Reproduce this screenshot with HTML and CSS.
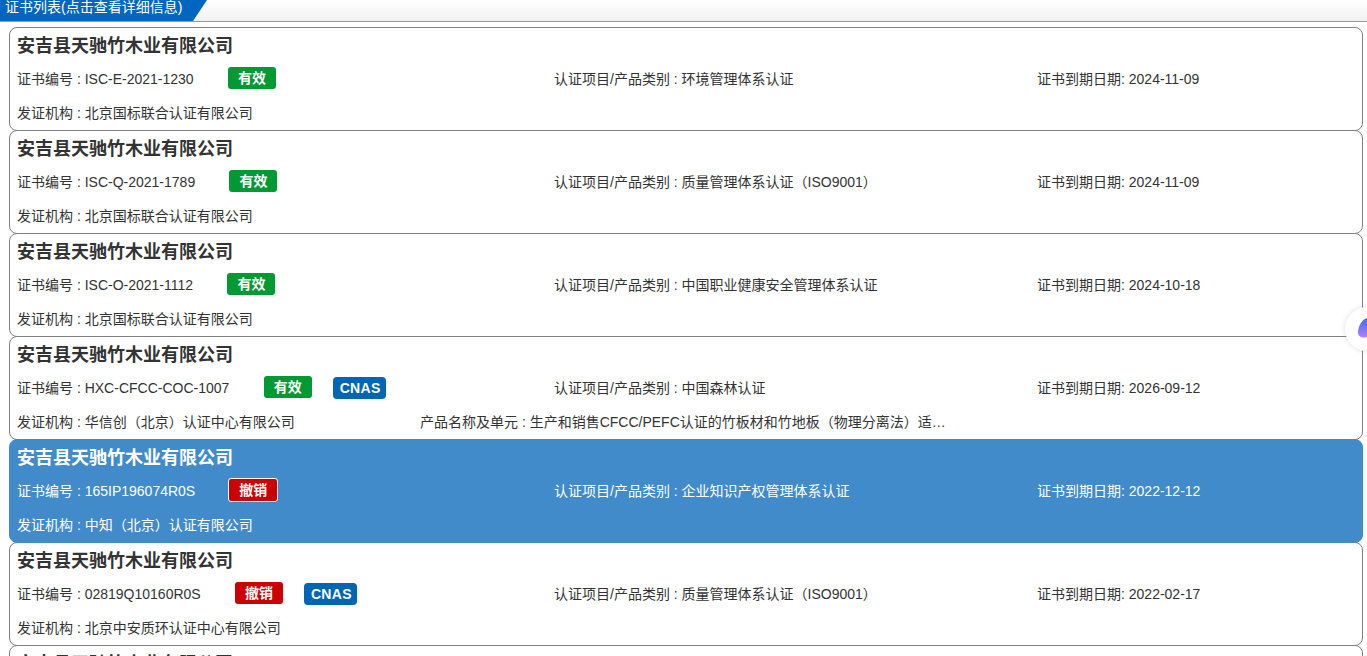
FILE: index.html
```html
<!DOCTYPE html>
<html lang="zh-CN">
<head>
<meta charset="utf-8">
<title>证书列表</title>
<link rel="stylesheet" href="styles.css">
</head>
<body>
<header class="bar"><div class="bar-tab">证书列表(点击查看详细信息)</div></header>
<main class="list">
  <article class="card">
    <h3 class="name">安吉县天驰竹木业有限公司</h3>
    <div class="row">
      <div class="cell">证书编号 : ISC-E-2021-1230<span class="tag ok">有效</span></div>
      <div class="cell">认证项目/产品类别 : 环境管理体系认证</div>
      <div class="cell">证书到期日期: 2024-11-09</div>
    </div>
    <div class="row2"><div class="cell">发证机构 : 北京国标联合认证有限公司</div></div>
  </article>
  <article class="card">
    <h3 class="name">安吉县天驰竹木业有限公司</h3>
    <div class="row">
      <div class="cell">证书编号 : ISC-Q-2021-1789<span class="tag ok">有效</span></div>
      <div class="cell">认证项目/产品类别 : 质量管理体系认证（ISO9001）</div>
      <div class="cell">证书到期日期: 2024-11-09</div>
    </div>
    <div class="row2"><div class="cell">发证机构 : 北京国标联合认证有限公司</div></div>
  </article>
  <article class="card">
    <h3 class="name">安吉县天驰竹木业有限公司</h3>
    <div class="row">
      <div class="cell">证书编号 : ISC-O-2021-1112<span class="tag ok">有效</span></div>
      <div class="cell">认证项目/产品类别 : 中国职业健康安全管理体系认证</div>
      <div class="cell">证书到期日期: 2024-10-18</div>
    </div>
    <div class="row2"><div class="cell">发证机构 : 北京国标联合认证有限公司</div></div>
  </article>
  <article class="card">
    <h3 class="name">安吉县天驰竹木业有限公司</h3>
    <div class="row">
      <div class="cell">证书编号 : HXC-CFCC-COC-1007<span class="tag ok">有效</span><span class="tag cnas">CNAS</span></div>
      <div class="cell">认证项目/产品类别 : 中国森林认证</div>
      <div class="cell">证书到期日期: 2026-09-12</div>
    </div>
    <div class="row2">
      <div class="cell">发证机构 : 华信创（北京）认证中心有限公司</div>
      <div class="cell clip">产品名称及单元 : 生产和销售CFCC/PEFC认证的竹板材和竹地板（物理分离法）适用于CFCC和PEFC</div>
    </div>
  </article>
  <article class="card active">
    <h3 class="name">安吉县天驰竹木业有限公司</h3>
    <div class="row">
      <div class="cell">证书编号 : 165IP196074R0S<span class="tag bad">撤销</span></div>
      <div class="cell">认证项目/产品类别 : 企业知识产权管理体系认证</div>
      <div class="cell">证书到期日期: 2022-12-12</div>
    </div>
    <div class="row2"><div class="cell">发证机构 : 中知（北京）认证有限公司</div></div>
  </article>
  <article class="card">
    <h3 class="name">安吉县天驰竹木业有限公司</h3>
    <div class="row">
      <div class="cell">证书编号 : 02819Q10160R0S<span class="tag bad">撤销</span><span class="tag cnas">CNAS</span></div>
      <div class="cell">认证项目/产品类别 : 质量管理体系认证（ISO9001）</div>
      <div class="cell">证书到期日期: 2022-02-17</div>
    </div>
    <div class="row2"><div class="cell">发证机构 : 北京中安质环认证中心有限公司</div></div>
  </article>
  <article class="card">
    <h3 class="name">安吉县天驰竹木业有限公司</h3>
  </article>
</main>
<aside class="float-btn">
  <svg class="float-icon" width="24" height="28" viewBox="0 0 24 28">
    <defs><linearGradient id="g" x1="0" y1="0" x2="0" y2="1"><stop offset="0" stop-color="#2f6ff0"/><stop offset="1" stop-color="#b57bff"/></linearGradient></defs>
    <path d="M1 17C1 10 5 3 12 1c5-1 9 0 11 2v8c-3-1-6 0-8 2-1 3-2 5-3 7-2 2-10 3-11-3z" fill="url(#g)"/>
  </svg>
</aside>
</body>
</html>
```
FILE: styles.css
```css
* { box-sizing: border-box; }
html, body { margin: 0; height: 656px; overflow: hidden; background: #fff; }
body {
  font-family: "Liberation Sans", "Noto Sans CJK SC", sans-serif;
  font-size: 14px;
  color: #333;
  position: relative;
}
.bar {
  height: 22px;
  background: linear-gradient(#ffffff, #f0f0f0);
  border-bottom: 1px solid #999;
}
.bar-tab {
  width: 207px;
  height: 21px;
  padding-left: 5px;
  background: #0066c0;
  color: #fff;
  font-size: 14px;
  line-height: 15px;
  clip-path: polygon(0 0, 100% 0, 193px 100%, 0 100%);
  overflow: hidden;
}
.list { padding: 5px 4px 0 9px; }
.card {
  height: 104px;
  margin-bottom: -1px;
  padding: 0 7px;
  border: 1px solid #808080;
  border-radius: 8px;
  background: #fff;
}
.name {
  margin: 0;
  height: 34px;
  padding-top: 6px;
  font-size: 18px;
  line-height: 24px;
  font-weight: 700;
  color: #333;
}
.row {
  display: grid;
  grid-template-columns: 538px 482px 1fr;
  height: 34px;
  align-items: center;
}
.row .cell:nth-child(2) { margin-left: -1px; }
.row2 {
  display: grid;
  grid-template-columns: 403px 526px;
  height: 34px;
  align-items: center;
}
.cell { white-space: nowrap; line-height: 24px; }
.clip { overflow: hidden; text-overflow: ellipsis; }
.tag {
  display: inline-block;
  height: 22px;
  line-height: 22px;
  margin-left: 34.3px;
  padding: 0 10px;
  border-radius: 3px;
  color: #fff;
  font-weight: 700;
  font-size: 14px;
  vertical-align: 1px;
  text-align: center;
}
.ok { background: #009933; }
.bad { background: #cc0000; }
.cnas {
  margin-left: 21px;
  padding: 0 5px 0 7px;
  background: #0066b3;
  border-radius: 4px;
  letter-spacing: 0.3px;
  vertical-align: 0;
}
.active {
  position: relative;
  background: #428bca;
  border-color: #428bca;
}
.active .name, .active .cell { color: #fff; }
.active .tag { box-sizing: content-box; border: 1px solid #fff; margin: -1px 0 -1px 33px; }
.float-btn {
  position: absolute;
  left: 1345px;
  top: 307px;
  width: 44px;
  height: 44px;
  border-radius: 50%;
  background: #fff;
  box-shadow: 0 0 5px rgba(120, 120, 160, 0.25);
  overflow: hidden;
}
.float-icon { position: absolute; left: 12px; top: 9px; }
```
